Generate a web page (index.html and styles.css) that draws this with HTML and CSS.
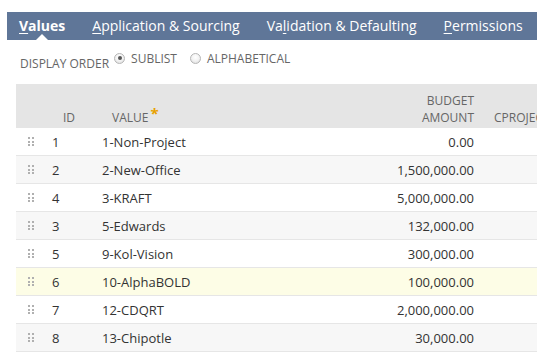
FILE: index.html
```html
<!DOCTYPE html>
<html>
<head>
<meta charset="utf-8">
<link rel="stylesheet" href="styles.css">
</head>
<body>
<div class="page">
  <div class="tabs">
    <div class="tab active"><u>V</u>alues</div>
    <div class="tab"><u>A</u>pplication &amp; Sourcing</div>
    <div class="tab">Va<u>l</u>idation &amp; Defaulting</div>
    <div class="tab"><u>P</u>ermissions</div>
  </div>
  <div class="order">
    <span class="order-label">DISPLAY ORDER</span>
    <span class="radio checked"></span><span class="opt">SUBLIST</span>
    <span class="radio"></span><span class="opt">ALPHABETICAL</span>
  </div>
  <div class="table">
    <div class="row head">
      <div class="c-drag"></div>
      <div class="c-id">ID</div>
      <div class="c-val">VALUE<span class="star">*</span></div>
      <div class="c-amt">BUDGET<br>AMOUNT</div>
      <div class="c-proj">CPROJECT</div>
    </div>
    <div class="row"><div class="c-drag"><i class="grip"></i></div><div class="c-id">1</div><div class="c-val">1-Non-Project</div><div class="c-amt">0.00</div><div class="c-proj"></div></div>
    <div class="row alt"><div class="c-drag"><i class="grip"></i></div><div class="c-id">2</div><div class="c-val">2-New-Office</div><div class="c-amt">1,500,000.00</div><div class="c-proj"></div></div>
    <div class="row"><div class="c-drag"><i class="grip"></i></div><div class="c-id">4</div><div class="c-val">3-KRAFT</div><div class="c-amt">5,000,000.00</div><div class="c-proj"></div></div>
    <div class="row alt"><div class="c-drag"><i class="grip"></i></div><div class="c-id">3</div><div class="c-val">5-Edwards</div><div class="c-amt">132,000.00</div><div class="c-proj"></div></div>
    <div class="row"><div class="c-drag"><i class="grip"></i></div><div class="c-id">5</div><div class="c-val">9-Kol-Vision</div><div class="c-amt">300,000.00</div><div class="c-proj"></div></div>
    <div class="row hl"><div class="c-drag"><i class="grip"></i></div><div class="c-id">6</div><div class="c-val">10-AlphaBOLD</div><div class="c-amt">100,000.00</div><div class="c-proj"></div></div>
    <div class="row"><div class="c-drag"><i class="grip"></i></div><div class="c-id">7</div><div class="c-val">12-CDQRT</div><div class="c-amt">2,000,000.00</div><div class="c-proj"></div></div>
    <div class="row alt"><div class="c-drag"><i class="grip"></i></div><div class="c-id">8</div><div class="c-val">13-Chipotle</div><div class="c-amt">30,000.00</div><div class="c-proj"></div></div>
  </div>
</div>
</body>
</html>
```
FILE: styles.css
```css
html, body { margin: 0; padding: 0; background: #fff; }
body { font-family: "Open Sans", "Liberation Sans", sans-serif; color: #333; overflow: hidden; }
.page { padding: 12px 0 0 7px; }
.tabs {
  display: flex;
  background: #5f7698;
  height: 28px;
  align-items: center;
}
.tab {
  color: #fff;
  font-size: 14px;
  padding: 0 12px;
  margin-right: 3px;
  position: relative;
  white-space: nowrap;
  line-height: 28px;
}
.tab u { text-decoration: underline; text-underline-offset: 2px; }
.tab.active { font-weight: 700; }
.tab.active::after {
  content: "";
  position: absolute;
  left: 50%;
  bottom: 0;
  margin-left: -6px;
  border-left: 6px solid transparent;
  border-right: 6px solid transparent;
  border-bottom: 6px solid #fff;
}
.order {
  display: flex;
  align-items: center;
  margin: 11px 0 0 13px;
  font-size: 12px;
  color: #666;
  height: 18px;
}
.order-label { margin-right: 5px; position: relative; top: 3px; }
.radio {
  width: 11px; height: 11px; border-radius: 50%;
  border: 1px solid #b5b5b5;
  background: radial-gradient(circle at 50% 35%, #fff 0%, #f2f2f2 50%, #d9d9d9 100%);
  box-sizing: border-box;
  position: relative; top: -2px;
  margin-right: 6px;
}
.radio.checked::after {
  content: ""; position: absolute; left: 2.5px; top: 2.5px;
  width: 4px; height: 4px; border-radius: 50%; background: #555;
}
.opt { margin-right: 13px; position: relative; top: -2px; }
.table { margin: 15px 0 0 9px; width: 540px; }
.row {
  display: flex;
  height: 27px;
  align-items: center;
  border-bottom: 1px solid #e6e6e6;
  font-size: 13px;
  color: #333;
}
.row.alt { background: #f7f7f7; }
.row.hl { background: #fdfde6; }
.row.head {
  background: #e5e5e5;
  height: 44px;
  border-bottom: none;
  align-items: flex-end;
  font-size: 12px;
  color: #666;
  padding-bottom: 2px;
  box-sizing: border-box;
  line-height: 17px;
}
.c-drag { width: 36px; padding-left: 12px; box-sizing: border-box; display: flex; align-items: center; }
.c-id { width: 50px; }
.row.head .c-id { padding-left: 11px; width: 50px; box-sizing: border-box; }
.c-val { width: 200px; }
.row.head .c-val { padding-left: 10px; box-sizing: border-box; }
.c-amt { width: 172px; text-align: right; }
.c-proj { padding-left: 20px; white-space: nowrap; }
.star { color: #e8a100; font-size: 15px; font-weight: 700; margin-left: 2px; position: relative; top: -3px; }
.grip {
  display: block; width: 6px; height: 9px;
  background-size: 2px 2px;
  background-repeat: no-repeat;
  background-image:
    linear-gradient(#b0b0b0,#b0b0b0), linear-gradient(#b0b0b0,#b0b0b0),
    linear-gradient(#b0b0b0,#b0b0b0), linear-gradient(#b0b0b0,#b0b0b0),
    linear-gradient(#b0b0b0,#b0b0b0), linear-gradient(#b0b0b0,#b0b0b0);
  background-position: 0 0, 4px 0, 0 3.5px, 4px 3.5px, 0 7px, 4px 7px;
}
```
